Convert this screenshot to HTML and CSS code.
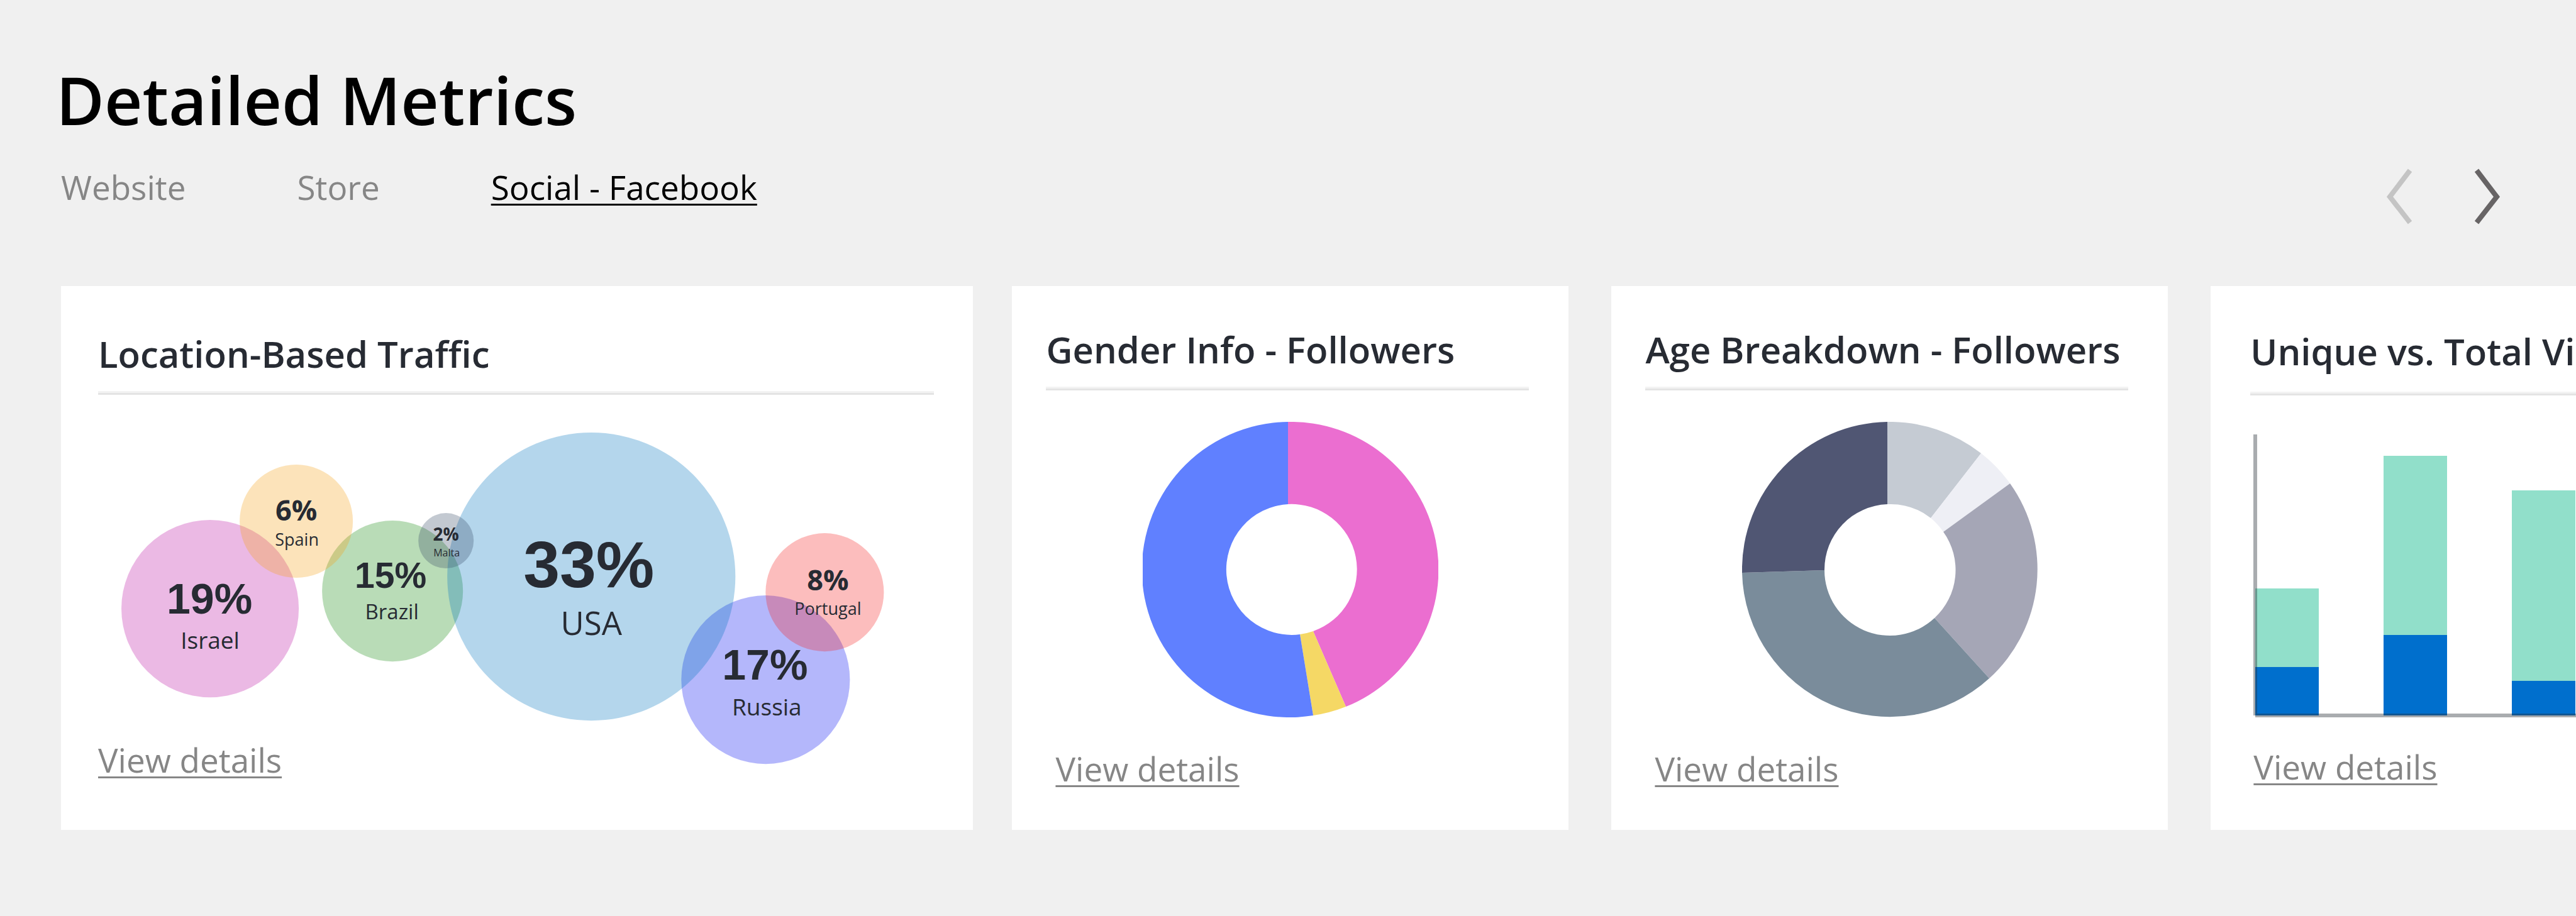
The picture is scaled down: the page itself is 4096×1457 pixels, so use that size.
FILE: index.html
```html
<!DOCTYPE html>
<html lang="en">
<head>
<meta charset="utf-8">
<title>Detailed Metrics</title>
<link rel="stylesheet" href="styles.css">
</head>
<body>
<main class="metrics">
  <header class="metrics-header">
    <h1 class="metrics-title">Detailed Metrics</h1>
    <div class="toolbar">
      <nav class="tabs" aria-label="Metric source">
        <a class="tab" href="#website">Website</a>
        <a class="tab" href="#store">Store</a>
        <a class="tab tab--active" href="#social" aria-current="page">Social - Facebook</a>
      </nav>
      <div class="pager">
        <button class="pager-button" type="button" aria-label="Previous" disabled>
          <svg class="pager-icon" viewBox="0 0 43 91"><path d="M38 4 L6 46 L38 87"/></svg>
        </button>
        <button class="pager-button" type="button" aria-label="Next">
          <svg class="pager-icon" viewBox="0 0 43 91"><path d="M5 4 L37 46 L5 87"/></svg>
        </button>
      </div>
    </div>
  </header>

  <div class="cards">
    <section class="card card--wide">
      <h2 class="card-title">Location-Based Traffic</h2>
      <svg class="bubbles" viewBox="0 0 1329 544" role="img" aria-label="Traffic by country">
        <g class="bubble-shapes">
          <circle class="israel" cx="178" cy="339" r="141"/>
          <circle class="brazil" cx="468" cy="311" r="112"/>
          <circle class="spain" cx="315" cy="200" r="90"/>
          <circle class="russia" cx="1061" cy="452" r="134"/>
          <circle class="usa" cx="784" cy="288" r="229"/>
          <circle class="portugal" cx="1155" cy="313" r="94"/>
          <circle class="malta" cx="553" cy="231" r="44"/>
        </g>
        <g class="bubble-text">
          <text class="value value--md" x="177" y="347">19%</text>
          <text class="label label--md" x="178" y="403">Israel</text>
          <text class="value value--sm" x="315" y="199">6%</text>
          <text class="label label--xs" x="316" y="239">Spain</text>
          <text class="value value--base" x="465" y="306">15%</text>
          <text class="label label--sm" x="467" y="356">Brazil</text>
          <text class="value value--xs" x="553" y="231">2%</text>
          <text class="label label--xxs" x="554" y="256">Malta</text>
          <text class="value value--lg" x="780" y="305">33%</text>
          <text class="label label--lg" x="784" y="381">USA</text>
          <text class="value value--md" x="1060" y="452">17%</text>
          <text class="label label--md" x="1063" y="509">Russia</text>
          <text class="value value--sm" x="1160" y="310">8%</text>
          <text class="label label--xs" x="1160" y="349">Portugal</text>
        </g>
      </svg>
      <a class="details" href="#location">View details</a>
    </section>

    <section class="card">
      <h2 class="card-title">Gender Info - Followers</h2>
      <svg class="donut" viewBox="0 0 470 470" role="img" aria-label="Followers by gender">
        <path fill="#eb6ed0" d="M231 0 A235 235 0 0 1 323 453 L271 333 A104 104 0 0 0 231 131 Z"/>
        <path fill="#f5d865" d="M323 453 A235 235 0 0 1 271 467 L250 338 A104 104 0 0 0 271 333 Z"/>
        <path fill="#6080ff" d="M271 467 A235 235 0 1 1 231 0 L231 131 A104 104 0 1 0 250 338 Z"/>
      </svg>
      <a class="details" href="#gender">View details</a>
    </section>

    <section class="card">
      <h2 class="card-title">Age Breakdown - Followers</h2>
      <svg class="donut" viewBox="0 0 470 470" role="img" aria-label="Followers by age">
        <path fill="#c5cbd3" d="M231 0 A235 235 0 0 1 380 50 L300 153 A104 104 0 0 0 231 131 Z"/>
        <path fill="#eeeff5" d="M380 50 A235 235 0 0 1 426 98 L320 175 A104 104 0 0 0 300 153 Z"/>
        <path fill="#a5a6b6" d="M426 98 A235 235 0 0 1 393 408 L306 312 A104 104 0 0 0 320 175 Z"/>
        <path fill="#7a8c9b" d="M393 408 A235 235 0 0 1 0 240 L131 236 A104 104 0 0 0 306 312 Z"/>
        <path fill="#505673" d="M0 240 A235 235 0 0 1 231 0 L231 131 A104 104 0 0 0 131 236 Z"/>
      </svg>
      <a class="details" href="#age">View details</a>
    </section>

    <section class="card card--bars">
      <h2 class="card-title">Unique vs. Total Vi</h2>
      <svg class="bars" viewBox="0 0 768 450" role="img" aria-label="Unique and total visitors">
        <g class="total">
          <rect x="8" y="245" width="101" height="125"/>
          <rect x="212" y="34" width="101" height="285"/>
          <rect x="416" y="89" width="101" height="303"/>
        </g>
        <g class="unique">
          <rect x="8" y="370" width="101" height="77"/>
          <rect x="212" y="319" width="101" height="128"/>
          <rect x="416" y="392" width="101" height="55"/>
        </g>
        <path class="axis" d="M5 0 h6 v444 h757 v6 h-760 v-3 h-3 z"/>
      </svg>
      <a class="details" href="#visitors">View details</a>
    </section>
  </div>
</main>
</body>
</html>
```

FILE: styles.css
```css
* {
  box-sizing: border-box;
}

body {
  margin: 0;
  background: #f0f0f0;
  color: #272b33;
  font-family: "Open Sans", "Noto Sans", sans-serif;
}

h1,
h2 {
  margin: 0;
  font-weight: 600;
}

.metrics {
  padding: 88px 0 136px 89px;
  overflow: hidden;
}

.metrics-header {
  margin-bottom: 97px;
  padding-right: 120px;
}

.metrics-title {
  color: #000;
  font-size: 105px;
  line-height: 142px;
}

.toolbar {
  display: flex;
  align-items: flex-start;
  justify-content: space-between;
  margin-top: 32px;
  padding-left: 8px;
}

.tabs {
  display: flex;
  gap: 177px;
}

.tab {
  color: #868686;
  font-size: 53px;
  line-height: 72px;
  text-decoration: none;
  white-space: nowrap;
}

.tab--active,
.details {
  text-decoration: underline;
  text-decoration-thickness: 3px;
  text-decoration-skip-ink: none;
  text-underline-offset: 6px;
}

.tab--active {
  color: #000;
}

.pager {
  display: flex;
  gap: 96px;
  padding-top: 5px;
}

.pager-button {
  padding: 0;
  border: 0;
  background: none;
  color: #676465;
  cursor: pointer;
}

.pager-button:disabled {
  color: #c4c4c4;
  cursor: default;
}

.pager-icon {
  display: block;
  width: 43px;
  height: 91px;
  fill: none;
  stroke: currentColor;
  stroke-width: 8;
}

.cards {
  display: flex;
  padding-left: 8px;
}

.card {
  display: flex;
  flex: none;
  flex-direction: column;
  width: 22.13%;
  padding: 63px 54px 61px;
  background: #fff;
}

.card + .card {
  margin-left: 68px;
}

.card--wide {
  width: 36.27%;
  padding: 70px 62px 74px 59px;
}

.card--wide + .card {
  margin-left: 62px;
}

.card--bars {
  padding-top: 66px;
  padding-left: 63px;
}

.card-title {
  margin-right: 9px;
  padding-bottom: 24px;
  border-bottom: 3px solid #e4e4e4;
  box-shadow: inset 0 -3px #f3f3f3;
  font-size: 58px;
  line-height: 76px;
  white-space: nowrap;
}

.card--wide .card-title {
  margin-right: 0;
}

.card--bars .card-title {
  padding-bottom: 29px;
}

.details {
  align-self: flex-start;
  margin: 46px 0 0 15px;
  color: #868686;
  font-size: 53px;
  line-height: 72px;
}

.card--wide .details {
  margin: 0;
}

.card--bars .details {
  margin: 43px 0 0 5px;
}

.bubbles {
  display: block;
  width: 100%;
  margin-top: 1px;
  overflow: visible;
}

.bubble-shapes {
  fill-opacity: 0.3;
}

.israel { fill: #bc16a5; }
.spain { fill: #f5a219; }
.brazil { fill: #168a12; }
.usa { fill: #0876c0; }
.malta { fill: #374b66; }
.russia { fill: #050ff2; }
.portugal { fill: #f52326; }

.bubble-text {
  fill: #272b33;
  text-anchor: middle;
}

.value {
  font-family: "Liberation Sans", Arial, sans-serif;
  font-weight: 700;
}

.value--lg { font-size: 104px; }
.value--md { font-size: 68px; }
.value--base { font-size: 57px; }

.value--sm,
.value--xs {
  font-family: "Open Sans", "Noto Sans", sans-serif;
}

.value--sm { font-size: 45px; }
.value--xs { font-size: 28px; }

.label--lg { font-size: 51px; }
.label--md { font-size: 37px; }
.label--sm { font-size: 33px; }
.label--xs { font-size: 27px; }
.label--xxs { font-size: 16px; }

.donut {
  display: block;
  align-self: center;
  width: 60.5%;
  margin-top: 50px;
}

.bars {
  display: block;
  width: 100%;
  margin-top: 62px;
}

.total { fill: #91dfca; }
.unique { fill: #006fcd; }

.axis {
  fill: #282f36;
  fill-opacity: 0.4;
}
```
